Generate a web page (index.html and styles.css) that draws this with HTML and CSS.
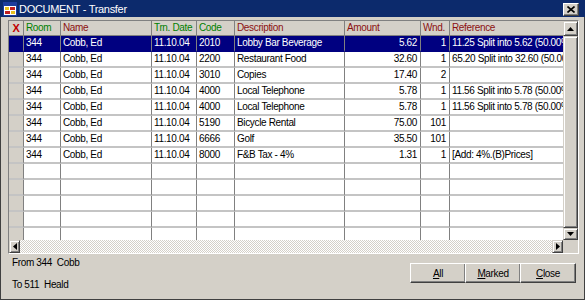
FILE: index.html
```html
<!DOCTYPE html>
<html>
<head>
<meta charset="utf-8">
<link rel="stylesheet" href="styles.css">
</head>
<body>
<div class="window">
  <div class="titlebar">
    <svg class="app-icon" width="14" height="14" viewBox="0 0 14 14">
      <rect x="0.5" y="0.5" width="13" height="13" fill="#ffffff" stroke="#1c3c9c"/>
      <rect x="1" y="1" width="12" height="3" fill="#1c3c9c"/>
      <rect x="2" y="5" width="4" height="3" fill="#e8c020"/>
      <rect x="7" y="5" width="5" height="3" fill="#c02020"/>
      <rect x="2" y="9" width="5" height="3" fill="#c02020"/>
      <rect x="8" y="9" width="4" height="3" fill="#e8c020"/>
    </svg>
    <span class="title">DOCUMENT - Transfer</span>
    <div class="close-btn">
      <svg width="8" height="7" viewBox="0 0 8 7"><path d="M0.5 0.5 L7.5 6.5 M7.5 0.5 L0.5 6.5" stroke="#000" stroke-width="1.6"/></svg>
    </div>
  </div>
  <div class="body">
    <div class="grid">
      <div class="grid-main">
        <div class="table-wrap">
          <table class="data">
            <thead>
              <tr>
                <th class="c-x mark">X</th>
                <th class="c-room green">Room</th>
                <th class="c-name red">Name</th>
                <th class="c-date green">Trn. Date</th>
                <th class="c-code green">Code</th>
                <th class="c-desc red">Description</th>
                <th class="c-amt red">Amount</th>
                <th class="c-wnd red">Wnd.</th>
                <th class="c-ref red">Reference</th>
              </tr>
            </thead>
            <tbody>
              <tr class="selected"><td class="rh"></td><td>344</td><td>Cobb, Ed</td><td>11.10.04</td><td>2010</td><td>Lobby Bar Beverage</td><td class="num">5.62</td><td class="num">1</td><td>11.25 Split into 5.62 (50.00%)</td></tr>
              <tr><td class="rh"></td><td>344</td><td>Cobb, Ed</td><td>11.10.04</td><td>2200</td><td>Restaurant Food</td><td class="num">32.60</td><td class="num">1</td><td>65.20 Split into 32.60 (50.00%)</td></tr>
              <tr><td class="rh"></td><td>344</td><td>Cobb, Ed</td><td>11.10.04</td><td>3010</td><td>Copies</td><td class="num">17.40</td><td class="num">2</td><td></td></tr>
              <tr><td class="rh"></td><td>344</td><td>Cobb, Ed</td><td>11.10.04</td><td>4000</td><td>Local Telephone</td><td class="num">5.78</td><td class="num">1</td><td>11.56 Split into 5.78 (50.00%)</td></tr>
              <tr><td class="rh"></td><td>344</td><td>Cobb, Ed</td><td>11.10.04</td><td>4000</td><td>Local Telephone</td><td class="num">5.78</td><td class="num">1</td><td>11.56 Split into 5.78 (50.00%)</td></tr>
              <tr><td class="rh"></td><td>344</td><td>Cobb, Ed</td><td>11.10.04</td><td>5190</td><td>Bicycle Rental</td><td class="num">75.00</td><td class="num">101</td><td></td></tr>
              <tr><td class="rh"></td><td>344</td><td>Cobb, Ed</td><td>11.10.04</td><td>6666</td><td>Golf</td><td class="num">35.50</td><td class="num">101</td><td></td></tr>
              <tr><td class="rh"></td><td>344</td><td>Cobb, Ed</td><td>11.10.04</td><td>8000</td><td>F&amp;B Tax - 4%</td><td class="num">1.31</td><td class="num">1</td><td>[Add: 4%.(B)Prices]</td></tr>
              <tr><td class="rh"></td><td></td><td></td><td></td><td></td><td></td><td></td><td></td><td></td></tr>
              <tr><td class="rh"></td><td></td><td></td><td></td><td></td><td></td><td></td><td></td><td></td></tr>
              <tr><td class="rh"></td><td></td><td></td><td></td><td></td><td></td><td></td><td></td><td></td></tr>
              <tr><td class="rh"></td><td></td><td></td><td></td><td></td><td></td><td></td><td></td><td></td></tr>
              <tr><td class="rh"></td><td></td><td></td><td></td><td></td><td></td><td></td><td></td><td></td></tr>
            </tbody>
          </table>
        </div>
        <div class="vscroll">
          <div class="sbtn vbtn"><svg width="7" height="4" viewBox="0 0 7 4"><path d="M3.5 0 L7 4 L0 4 Z" fill="#000"/></svg></div>
          <div class="vthumb"></div>
          <div class="sbtn vbtn vdown"><svg width="7" height="4" viewBox="0 0 7 4"><path d="M0 0 L7 0 L3.5 4 Z" fill="#000"/></svg></div>
        </div>
      </div>
      <div class="hscroll-row">
        <div class="hscroll">
          <div class="sbtn hbtn"><svg width="4" height="7" viewBox="0 0 4 7"><path d="M4 0 L4 7 L0 3.5 Z" fill="#000"/></svg></div>
          <div class="htrack"></div>
          <div class="sbtn hbtn"><svg width="4" height="7" viewBox="0 0 4 7"><path d="M0 0 L4 3.5 L0 7 Z" fill="#000"/></svg></div>
        </div>
        <div class="corner"></div>
      </div>
    </div>
    <div class="footer">
      <div class="labels">
        <div class="label">From 344&nbsp; Cobb</div>
        <div class="label">To 511&nbsp; Heald</div>
      </div>
      <div class="buttons">
        <button class="btn"><u>A</u>ll</button>
        <button class="btn"><u>M</u>arked</button>
        <button class="btn"><u>C</u>lose</button>
      </div>
    </div>
  </div>
</div>
</body>
</html>
```
FILE: styles.css
```css
* { box-sizing: border-box; }
html, body { margin: 0; padding: 0; background: #d4d0c8; }
body {
  font-family: "Liberation Sans", Arial, sans-serif;
  font-size: 10px;
  letter-spacing: -0.35px;
  color: #000;
}
.window {
  width: 585px;
  height: 300px;
  display: flex;
  flex-direction: column;
  background: #d4d0c8;
}
.titlebar {
  height: 17px;
  flex: none;
  background: #0c2a6c;
  display: flex;
  align-items: center;
  padding: 0 6px 0 3px;
  color: #fff;
}
.app-icon { flex: none; margin-right: 2px; }
.title { font-size: 11px; letter-spacing: -0.3px; flex: 1; }
.close-btn {
  width: 16px;
  height: 13px;
  background: #d4d0c8;
  border: 1px solid;
  border-color: #fff #404040 #404040 #fff;
  box-shadow: inset -1px -1px 0 #808080;
  display: flex;
  align-items: center;
  justify-content: center;
  margin-top: 1px;
}
.body {
  flex: 1;
  border-left: 1px solid #404040;
  border-right: 1px solid #404040;
  border-bottom: 1px solid #404040;
  padding: 3px 6px 0 7px;
  display: flex;
  flex-direction: column;
}
.grid {
  width: 571px;
  height: 234px;
  border-top: 1px solid #808080;
  border-left: 1px solid #808080;
  border-right: 1px solid #fff;
  border-bottom: 1px solid #fff;
  display: flex;
  flex-direction: column;
  background: #fff;
}
.grid-main { display: flex; height: 219px; }
.table-wrap { width: 554px; height: 219px; overflow: hidden; }
.data {
  border-collapse: separate;
  border-spacing: 0;
  table-layout: fixed;
  width: 554px;
}
.data th, .data td {
  padding: 0 2px 0 2px;
  white-space: nowrap;
  overflow: hidden;
  text-align: left;
  font-weight: normal;
  border-right: 1px solid #808080;
}
.data th {
  height: 15px;
  background: #d4d0c8;
  border-bottom: 1px solid #808080;
  line-height: 14px;
}
.data td {
  height: 16px;
  line-height: 14px;
  border-bottom: 2px solid #c4c4c4;
  background: #fff;
}
.data td.rh { background: #d4d0c8; }
.data td.num { text-align: right; padding-right: 3px; }
.data th:last-child, .data td:last-child { border-right: none; }
.c-x { width: 15px; }
.c-room { width: 37px; }
.c-name { width: 91px; }
.c-date { width: 45px; }
.c-code { width: 38px; }
.c-desc { width: 110px; }
.c-amt { width: 76px; }
.c-wnd { width: 29px; }
.c-ref { width: 113px; }
.green { color: #008000; }
.red { color: #8c1010; }
.mark { color: #c00000; font-weight: bold !important; text-align: center !important; font-size: 11px; }
.data tr.selected td { background: #000080; color: #fff; border-bottom-color: #000080; }
.vscroll {
  width: 15px;
  height: 219px;
  display: flex;
  flex-direction: column;
  background: #d4d0c8;
}
.sbtn {
  background: #d4d0c8;
  border: 1px solid;
  border-color: #d4d0c8 #404040 #404040 #d4d0c8;
  box-shadow: inset 1px 1px 0 #fff, inset -1px -1px 0 #808080;
  display: flex;
  align-items: center;
  justify-content: center;
  flex: none;
}
.vbtn { height: 15px; width: 15px; }
.vdown { height: 12px; }
.vthumb {
  flex: 1;
  background: #d4d0c8;
  border: 1px solid;
  border-color: #d4d0c8 #404040 #404040 #d4d0c8;
  box-shadow: inset 1px 1px 0 #fff, inset -1px -1px 0 #808080;
}
.hscroll-row { display: flex; height: 13px; }
.hscroll { width: 554px; display: flex; }
.hbtn { width: 11px; height: 13px; }
.htrack {
  flex: 1;
  background: repeating-conic-gradient(#ffffff 0 25%, #d4d0c8 0 50%) 0 0 / 2px 2px;
}
.corner { width: 15px; background: #d4d0c8; }
.footer {
  flex: 1;
  display: flex;
  justify-content: space-between;
  align-items: flex-start;
}
.labels {
  padding: 2px 0 0 4px;
  display: flex;
  flex-direction: column;
  gap: 9px;
}
.label { line-height: 13px; }
.buttons {
  display: flex;
  padding-top: 9px;
  margin-right: 2px;
}
.btn {
  width: 56px;
  height: 20px;
  margin: 0;
  font-family: "Liberation Sans", Arial, sans-serif;
  font-size: 10px;
  letter-spacing: -0.35px;
  color: #000;
  background: #d4d0c8;
  border: 1px solid;
  border-color: #fff #404040 #404040 #fff;
  box-shadow: inset -1px -1px 0 #808080;
  padding: 0;
}
.btn + .btn { margin-left: -1px; }
```
